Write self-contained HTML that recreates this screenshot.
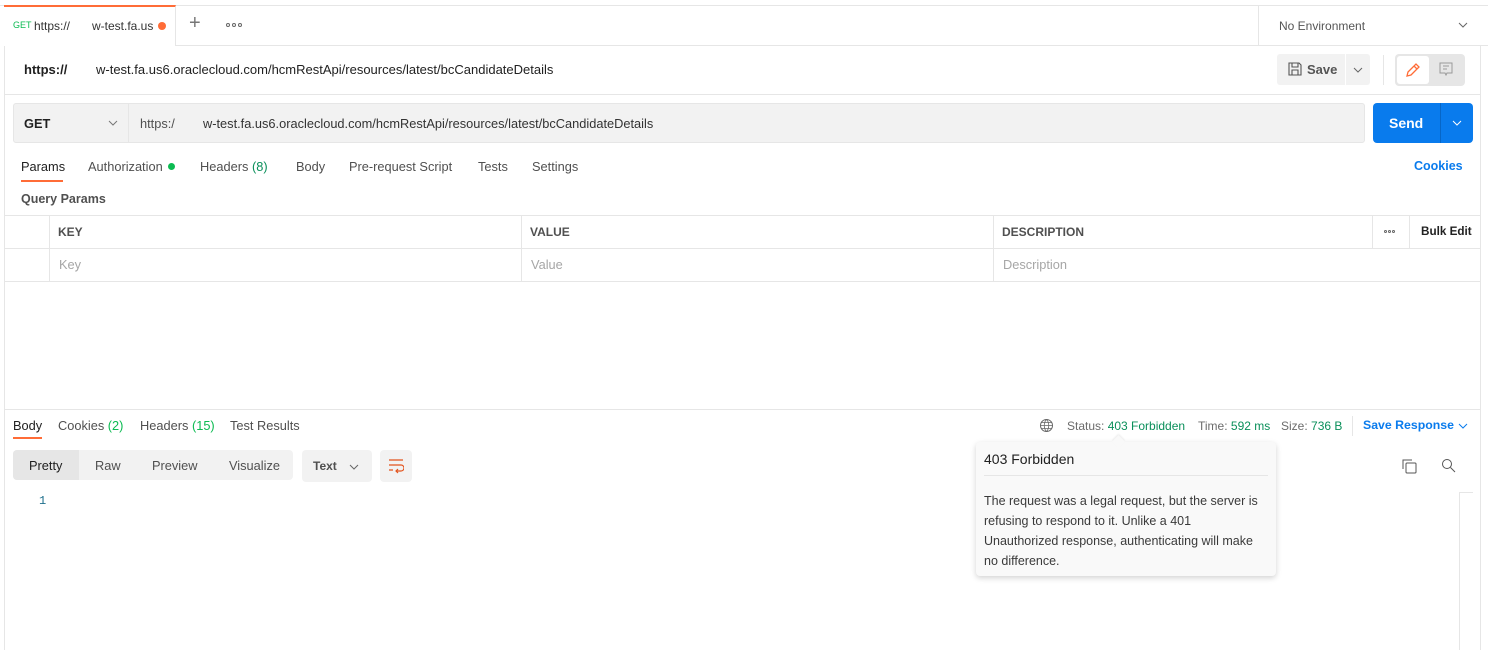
<!DOCTYPE html>
<html><head><meta charset="utf-8"><style>
*{box-sizing:border-box;margin:0;padding:0}
body{width:1488px;height:650px;background:#fff;font-family:"Liberation Sans",sans-serif;font-size:12.8px;color:#505050;position:relative;overflow:hidden}
.a{position:absolute;white-space:nowrap}
.hl{position:absolute;height:1px;background:#e6e6e6}
.vl{position:absolute;width:1px;background:#e6e6e6}
.g{color:#0a8f5a}
.dots{position:absolute;display:flex;gap:2px}
.dots i{display:block;width:4px;height:4px;border:1px solid #666;border-radius:50%}
</style></head><body>
<div class="hl" style="left:0;top:5px;width:1488px"></div>
<div class="vl" style="left:4px;top:5px;height:645px"></div>
<div class="vl" style="left:1480px;top:45px;height:605px"></div>
<div class="a" style="left:4px;top:5px;width:172px;height:41px;background:#fff;border-top:2px solid #ff6c37;border-right:1px solid #e6e6e6"></div>
<div class="a" style="left:13px;top:20px;font-size:9px;color:#0cbb52">GET</div>
<div class="a" style="left:34px;top:19px;font-size:12px;color:#333">https://</div>
<div class="a" style="left:92px;top:19px;font-size:12px;color:#333">w-test.fa.us</div>
<div class="a" style="left:158px;top:22px;width:8px;height:8px;border-radius:50%;background:#ff6c37"></div>
<div class="a" style="left:189px;top:12px;font-size:20px;color:#777;font-weight:300">+</div>
<div class="dots" style="left:226px;top:23px"><i></i><i></i><i></i></div>
<div class="hl" style="left:176px;top:45px;width:1312px"></div>
<div class="vl" style="left:1258px;top:5px;height:40px"></div>
<div class="a" style="left:1279px;top:19px;font-size:12px;color:#555">No Environment</div>
<svg class="a" style="left:1458px;top:22px" width="10" height="6"><path d="M1 1l4 4 4-4" stroke="#666" fill="none"/></svg>
<div class="a" style="left:24px;top:62px;font-size:13px;font-weight:bold;color:#212121">https://</div>
<div class="a" style="left:96px;top:62px;font-size:13px;color:#212121">w-test.fa.us6.oraclecloud.com/hcmRestApi/resources/latest/bcCandidateDetails</div>
<div class="a" style="left:1277px;top:54px;width:68px;height:31px;background:#f2f2f2;border-radius:3px 0 0 3px"></div>
<svg class="a" style="left:1288px;top:62px" width="14" height="14"><path d="M1 1h10l2 2v10H1z M4 1v4h6V1 M4 13V8h6v5" stroke="#555" fill="none" stroke-width="1.1"/></svg>
<div class="a" style="left:1307px;top:62px;font-size:13px;font-weight:bold;color:#555">Save</div>
<div class="a" style="left:1346px;top:54px;width:24px;height:31px;background:#f2f2f2;border-radius:0 3px 3px 0"></div>
<svg class="a" style="left:1353px;top:67px" width="10" height="6"><path d="M1 1l4 4 4-4" stroke="#666" fill="none"/></svg>
<div class="vl" style="left:1383px;top:55px;height:30px"></div>
<div class="a" style="left:1395px;top:54px;width:70px;height:32px;background:#e6e6e6;border-radius:4px"></div>
<div class="a" style="left:1397px;top:56px;width:32px;height:28px;background:#fff;border-radius:3px"></div>
<svg class="a" style="left:1405px;top:62px" width="16" height="16"><path d="M2 14l1-4 8-8 3 3-8 8z M9 4l3 3" stroke="#ff6c37" fill="none" stroke-width="1.3"/></svg>
<svg class="a" style="left:1439px;top:62px" width="14" height="15"><path d="M1 1h12v10H8l-1 2-1-2H1z M4 4h6 M4 7h4" stroke="#999" fill="none"/></svg>
<div class="hl" style="left:4px;top:94px;width:1476px"></div>
<div class="a" style="left:13px;top:103px;width:1352px;height:40px;background:#f2f2f2;border:1px solid #e6e6e6;border-radius:3px"></div>
<div class="vl" style="left:128px;top:104px;height:38px"></div>
<div class="a" style="left:24px;top:116px;font-weight:bold;color:#212121">GET</div>
<svg class="a" style="left:108px;top:120px" width="10" height="6"><path d="M1 1l4 4 4-4" stroke="#777" fill="none"/></svg>
<div class="a" style="left:140px;top:116px;color:#505050">https:/</div>
<div class="a" style="left:203px;top:116px;color:#333">w-test.fa.us6.oraclecloud.com/hcmRestApi/resources/latest/bcCandidateDetails</div>
<div class="a" style="left:1373px;top:103px;width:100px;height:40px;background:#097bed;border-radius:4px"></div>
<div class="vl" style="left:1440px;top:103px;height:40px;background:#0666c7"></div>
<div class="a" style="left:1389px;top:115px;font-size:14px;font-weight:bold;color:#fff">Send</div>
<svg class="a" style="left:1452px;top:120px" width="10" height="6"><path d="M1 1l4 4 4-4" stroke="#fff" fill="none"/></svg>
<div class="a" style="left:21px;top:159px;color:#212121">Params</div>
<div class="a" style="left:21px;top:180px;width:42px;height:2px;background:#ff6c37"></div>
<div class="a" style="left:88px;top:159px">Authorization</div>
<div class="a" style="left:168px;top:163px;width:7px;height:7px;border-radius:50%;background:#0cbb52"></div>
<div class="a" style="left:200px;top:159px">Headers <span class="g">(8)</span></div>
<div class="a" style="left:296px;top:159px">Body</div>
<div class="a" style="left:349px;top:159px">Pre-request Script</div>
<div class="a" style="left:478px;top:159px">Tests</div>
<div class="a" style="left:532px;top:159px">Settings</div>
<div class="a" style="left:1414px;top:159px;font-weight:bold;color:#097bed;font-size:12.5px">Cookies</div>
<div class="a" style="left:21px;top:192px;font-weight:bold;color:#505050;font-size:12.5px">Query Params</div>
<div class="hl" style="left:4px;top:215px;width:1476px"></div>
<div class="hl" style="left:4px;top:248px;width:1476px"></div>
<div class="hl" style="left:4px;top:281px;width:1476px"></div>
<div class="vl" style="left:49px;top:215px;height:66px"></div>
<div class="vl" style="left:521px;top:215px;height:66px"></div>
<div class="vl" style="left:993px;top:215px;height:66px"></div>
<div class="vl" style="left:1372px;top:215px;height:33px"></div>
<div class="vl" style="left:1409px;top:215px;height:33px"></div>
<div class="a" style="left:58px;top:225px;font-size:12px;font-weight:bold">KEY</div>
<div class="a" style="left:530px;top:225px;font-size:12px;font-weight:bold">VALUE</div>
<div class="a" style="left:1002px;top:225px;font-size:12px;font-weight:bold">DESCRIPTION</div>
<div class="dots" style="left:1384px;top:230px;gap:1px"><i style="width:3px;height:3px"></i><i style="width:3px;height:3px"></i><i style="width:3px;height:3px"></i></div>
<div class="a" style="left:1421px;top:225px;font-size:11.7px;font-weight:bold;color:#212121">Bulk Edit</div>
<div class="a" style="left:59px;top:257px;color:#a6a6a6">Key</div>
<div class="a" style="left:531px;top:257px;color:#a6a6a6">Value</div>
<div class="a" style="left:1003px;top:257px;color:#a6a6a6">Description</div>
<div class="hl" style="left:4px;top:409px;width:1476px"></div>
<div class="a" style="left:13px;top:418px;color:#212121">Body</div>
<div class="a" style="left:13px;top:437px;width:29px;height:2px;background:#ff6c37"></div>
<div class="a" style="left:58px;top:418px">Cookies <span style="color:#0cbb52">(2)</span></div>
<div class="a" style="left:140px;top:418px">Headers <span style="color:#0cbb52">(15)</span></div>
<div class="a" style="left:230px;top:418px">Test Results</div>
<svg class="a" style="left:1039px;top:418px" width="15" height="15"><circle cx="7.5" cy="7.5" r="6" stroke="#666" fill="none"/><path d="M1.5 7.5h12 M7.5 1.5c-3 3-3 9 0 12 M7.5 1.5c3 3 3 9 0 12 M2.5 4.5h10 M2.5 10.5h10" stroke="#666" fill="none" stroke-width=".8"/></svg>
<div class="a" style="left:1067px;top:419px;font-size:12px;color:#6b6b6b">Status: <span class="g">403 Forbidden</span></div>
<div class="a" style="left:1198px;top:419px;font-size:12px;color:#6b6b6b">Time: <span class="g">592 ms</span></div>
<div class="a" style="left:1281px;top:419px;font-size:12px;color:#6b6b6b">Size: <span class="g">736 B</span></div>
<div class="vl" style="left:1352px;top:416px;height:20px"></div>
<div class="a" style="left:1363px;top:418px;font-weight:bold;color:#097bed;font-size:12.3px">Save Response</div>
<svg class="a" style="left:1458px;top:423px" width="10" height="6"><path d="M1 1l4 4 4-4" stroke="#097bed" fill="none"/></svg>
<div class="a" style="left:13px;top:450px;width:280px;height:30px;background:#f2f2f2;border-radius:4px"></div>
<div class="a" style="left:13px;top:450px;width:66px;height:30px;background:#e6e6e6;border-radius:4px 0 0 4px"></div>
<div class="a" style="left:29px;top:458px;color:#212121">Pretty</div>
<div class="a" style="left:95px;top:458px">Raw</div>
<div class="a" style="left:152px;top:458px">Preview</div>
<div class="a" style="left:229px;top:458px">Visualize</div>
<div class="a" style="left:302px;top:450px;width:70px;height:32px;background:#f2f2f2;border-radius:4px"></div>
<div class="a" style="left:313px;top:459px;font-size:12px;font-weight:bold;color:#505050">Text</div>
<svg class="a" style="left:349px;top:464px" width="10" height="6"><path d="M1 1l4 4 4-4" stroke="#666" fill="none"/></svg>
<div class="a" style="left:380px;top:450px;width:32px;height:32px;background:#f2f2f2;border-radius:4px"></div>
<svg class="a" style="left:388px;top:458px" width="16" height="16"><path d="M1 2h14 M1 7h12a3 3 0 0 1 0 6H8 M10 11l-2 2 2 2 M1 12h4" stroke="#e3531d" fill="none" stroke-width="1.2"/></svg>
<svg class="a" style="left:1402px;top:459px" width="15" height="15"><path d="M1 10V1h9" stroke="#555" fill="none"/><rect x="4" y="4" width="10" height="10" rx="1" stroke="#555" fill="none"/></svg>
<svg class="a" style="left:1441px;top:458px" width="15" height="15"><circle cx="6" cy="6" r="4.5" stroke="#555" fill="none"/><path d="M9.5 9.5l4.5 4.5" stroke="#555"/></svg>
<div class="a" style="left:39px;top:494px;font-size:12px;font-family:'Liberation Mono',monospace;color:#1e6f8c">1</div>
<div class="vl" style="left:1459px;top:492px;height:158px"></div>
<div class="hl" style="left:1459px;top:492px;width:14px"></div>
<div class="a" style="left:976px;top:442px;width:300px;height:134px;background:#f9f9f9;border-radius:4px;box-shadow:0 2px 6px rgba(0,0,0,.18)"></div>
<div class="a" style="left:1114px;top:437px;width:9px;height:9px;background:#f9f9f9;transform:rotate(45deg);box-shadow:-1px -1px 2px rgba(0,0,0,.08)"></div>
<div class="a" style="left:984px;top:451px;font-size:14px;color:#212121">403 Forbidden</div>
<div class="hl" style="left:984px;top:475px;width:284px"></div>
<div class="a" style="left:984px;top:491px;width:284px;white-space:normal;font-size:12.5px;line-height:20px;color:#3a3a3a">The request was a legal request, but the server is refusing to respond to it. Unlike a 401 Unauthorized response, authenticating will make no difference.</div>
</body></html>
